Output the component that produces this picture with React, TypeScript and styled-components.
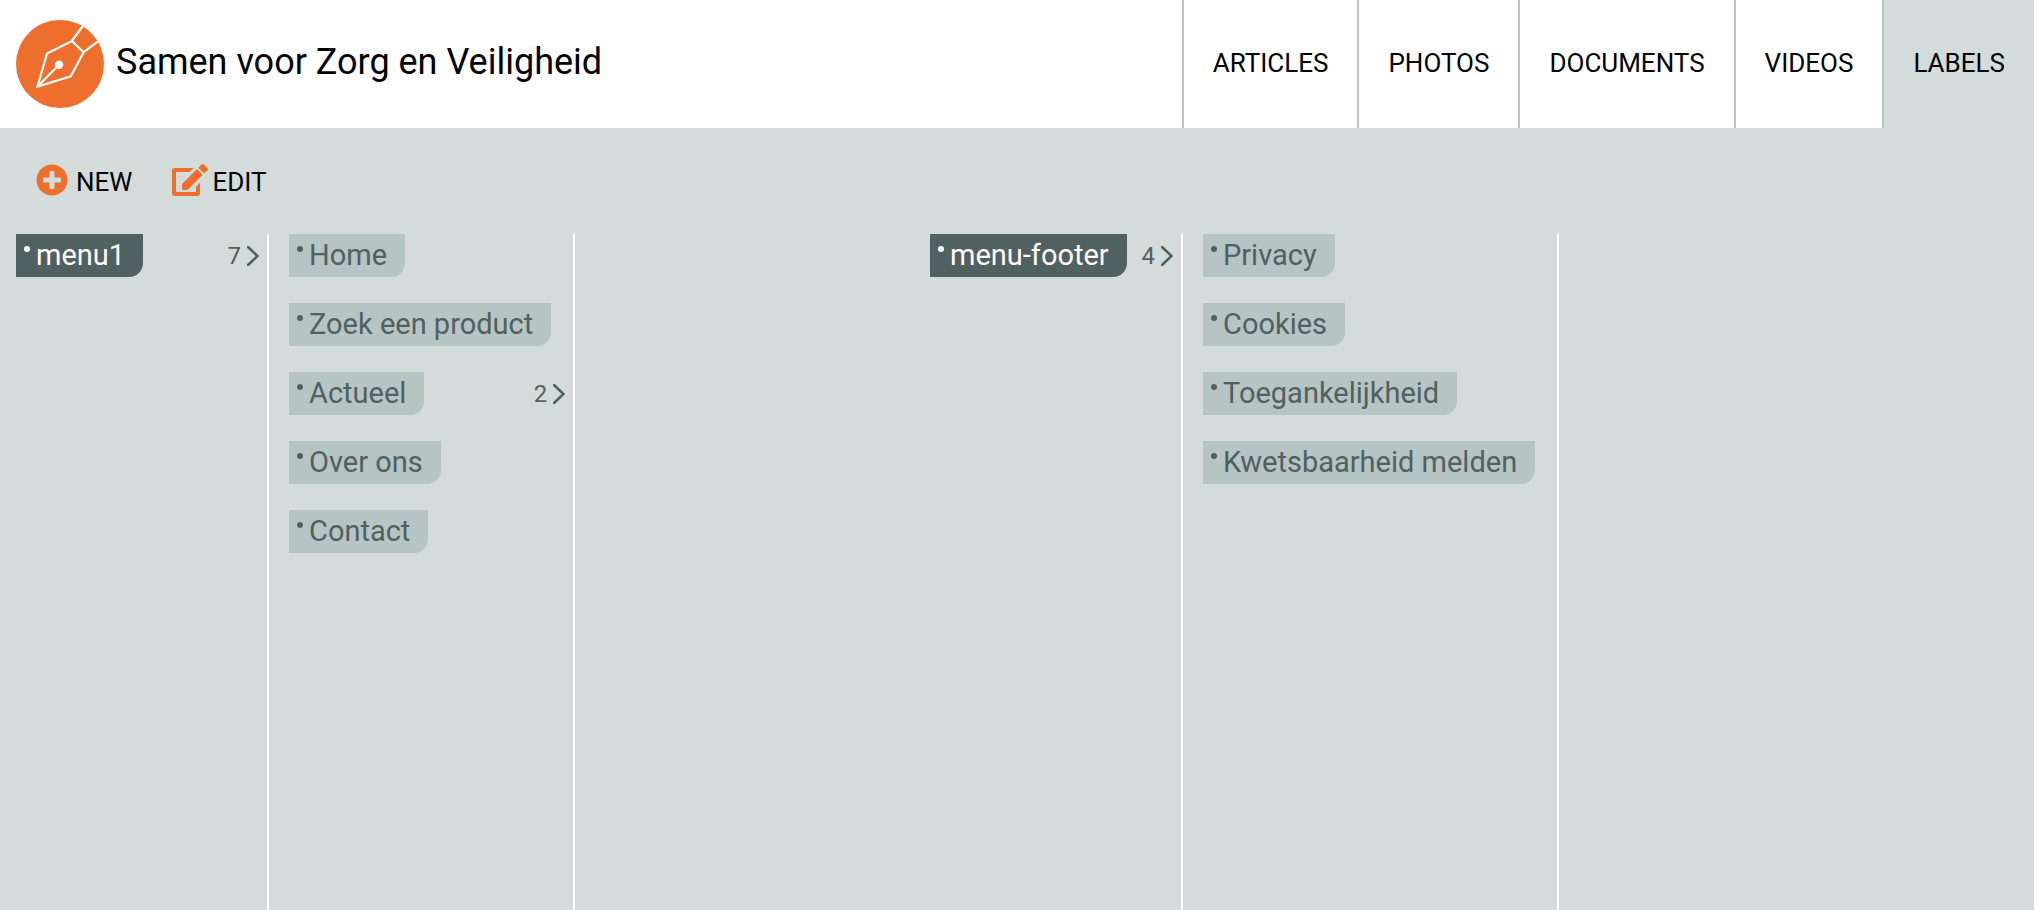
import React from "react";
import styled, { createGlobalStyle } from "styled-components";
import { FaPlusCircle } from "react-icons/fa";

const color = {
  accent: "#ee6f2d",
  page: "#d3dcdb",
  soft: "#b6c4c3",
  dark: "#516060",
};

const GlobalStyle = createGlobalStyle`
  *, *::before, *::after { box-sizing: border-box; }
  body {
    margin: 0;
    background: ${color.page};
    color: #000;
    font-family: Roboto, "Liberation Sans", sans-serif;
  }
`;

const Page = styled.div`
  display: flex;
  flex-direction: column;
  min-height: 100vh;
`;

const Header = styled.header`
  display: flex;
  justify-content: space-between;
  min-height: 128px;
  background: #fff;
`;

const Brand = styled.div`
  display: flex;
  align-items: center;
  gap: 12px;
  padding-left: 16px;
`;

const Logo = styled.svg`
  width: 88px;
  height: 88px;
`;

const Title = styled.h1`
  margin: 0;
  padding-bottom: 4px;
  font-size: 36px;
  line-height: 44px;
  font-weight: 400;
`;

const Nav = styled.nav`
  display: flex;
`;

const NavLink = styled.a<{ $active?: boolean }>`
  display: flex;
  align-items: center;
  padding: 0 29px 2px;
  border-left: 2px solid ${color.soft};
  background: ${(p) => (p.$active ? color.page : "#fff")};
  color: inherit;
  font-size: 26px;
  line-height: 32px;
  text-decoration: none;
`;

const Toolbar = styled.div`
  display: flex;
  gap: 40px;
  padding: 36px 36px 34px;
`;

const ToolButton = styled.button`
  display: flex;
  align-items: flex-start;
  gap: 4px;
  padding: 0;
  border: 0;
  background: none;
  color: inherit;
  font: inherit;
  font-size: 26px;
  line-height: 36px;
  cursor: pointer;

  svg {
    flex: none;
    height: 32px;
    color: ${color.accent};
  }
`;

const PlusIcon = styled(FaPlusCircle)`
  width: 32px;
  margin-right: 4px;
`;

const Forest = styled.main`
  flex: 1;
  display: grid;
  grid-template-columns: 914fr 1104fr;
  padding-left: 16px;
`;

const Tree = styled.section`
  display: flex;
`;

const Column = styled.ul`
  display: flex;
  flex-direction: column;
  gap: 26px;
  min-width: 253px;
  margin: 0 20px 0 0;
  padding: 0;
  border-right: 2px solid #fff;
  list-style: none;
`;

const Row = styled.li`
  display: flex;
  align-items: center;
  justify-content: space-between;
  gap: 14px;
`;

const Label = styled.a<{ $selected?: boolean }>`
  display: flex;
  align-items: flex-start;
  gap: 6px;
  height: 43px;
  margin-right: ${(p) => (p.$selected ? 0 : 22)}px;
  padding: 0 18px 0 8px;
  border-bottom-right-radius: 14px;
  background: ${(p) => (p.$selected ? color.dark : color.soft)};
  color: ${(p) => (p.$selected ? "#fff" : color.dark)};
  font-size: 29px;
  line-height: 43px;
  text-decoration: none;
  white-space: nowrap;

  &::before {
    content: "";
    width: 6px;
    height: 6px;
    margin-top: 12px;
    border-radius: 50%;
    background: currentColor;
  }
`;

const Expand = styled.button`
  display: flex;
  align-items: center;
  gap: 6px;
  padding: 0 8px 0 0;
  border: 0;
  background: none;
  color: ${color.dark};
  font: inherit;
  font-size: 24px;
  line-height: 32px;
  cursor: pointer;
`;

const Chevron = () => (
  <svg width="12" height="20" viewBox="0 0 12 20" fill="none" aria-hidden="true">
    <path d="M1 1L10.5 10L1 19" stroke="currentColor" strokeWidth="2.6" strokeLinecap="round" />
  </svg>
);

const EditIcon = () => (
  <svg width="36" height="32" viewBox="0 0 108 96" fill="currentColor" aria-hidden="true">
    <path d="M65 12H8Q0 12 0 20V88Q0 96 8 96H76Q84 96 84 88V56L72 68V84H12V24H53Z" />
    <path d="M75 15L92 32L47 77Q46 78 44 78H34Q30 78 30 74V63Q30 61 31 59Z" />
    <path d="M79 11L88 2Q92 -2 96 2L106 12Q110 16 106 20L96 28Z" />
  </svg>
);

const PenLogo = () => (
  <Logo viewBox="0 0 88 88" aria-hidden="true">
    <circle cx="44" cy="44" r="44" fill={color.accent} />
    <g fill="none" stroke="#fff" strokeWidth="2.2">
      <path d="M21.5 66.5L31 33.5L55.8 21L67.6 32.2L54.8 56.3Z" />
      <path d="M55.8 21L66.8 6M67.6 32.2L82 21.4M21.5 66.5L43 44.7" />
    </g>
    <circle cx="43" cy="44.7" r="4.2" fill="#fff" />
  </Logo>
);

interface Item {
  name: string;
  count?: number;
  selected?: boolean;
}

const sections = ["ARTICLES", "PHOTOS", "DOCUMENTS", "VIDEOS", "LABELS"];

const trees: Item[][][] = [
  [
    [{ name: "menu1", count: 7, selected: true }],
    [
      { name: "Home" },
      { name: "Zoek een product" },
      { name: "Actueel", count: 2 },
      { name: "Over ons" },
      { name: "Contact" },
    ],
  ],
  [
    [{ name: "menu-footer", count: 4, selected: true }],
    [
      { name: "Privacy" },
      { name: "Cookies" },
      { name: "Toegankelijkheid" },
      { name: "Kwetsbaarheid melden" },
    ],
  ],
];

export default function App() {
  return (
    <>
      <GlobalStyle />
      <Page>
        <Header>
          <Brand>
            <PenLogo />
            <Title>Samen voor Zorg en Veiligheid</Title>
          </Brand>
          <Nav>
            {sections.map((name) => (
              <NavLink
                key={name}
                href={`#${name.toLowerCase()}`}
                $active={name === "LABELS"}
                aria-current={name === "LABELS" ? "page" : undefined}
              >
                {name}
              </NavLink>
            ))}
          </Nav>
        </Header>
        <Toolbar>
          <ToolButton type="button">
            <PlusIcon />
            NEW
          </ToolButton>
          <ToolButton type="button">
            <EditIcon />
            EDIT
          </ToolButton>
        </Toolbar>
        <Forest>
          {trees.map((columns, t) => (
            <Tree key={t}>
              {columns.map((items, c) => (
                <Column key={c}>
                  {items.map((item) => (
                    <Row key={item.name}>
                      <Label href={`#${item.name}`} $selected={item.selected}>
                        {item.name}
                      </Label>
                      {item.count !== undefined && (
                        <Expand type="button">
                          {item.count}
                          <Chevron />
                        </Expand>
                      )}
                    </Row>
                  ))}
                </Column>
              ))}
            </Tree>
          ))}
        </Forest>
      </Page>
    </>
  );
}
